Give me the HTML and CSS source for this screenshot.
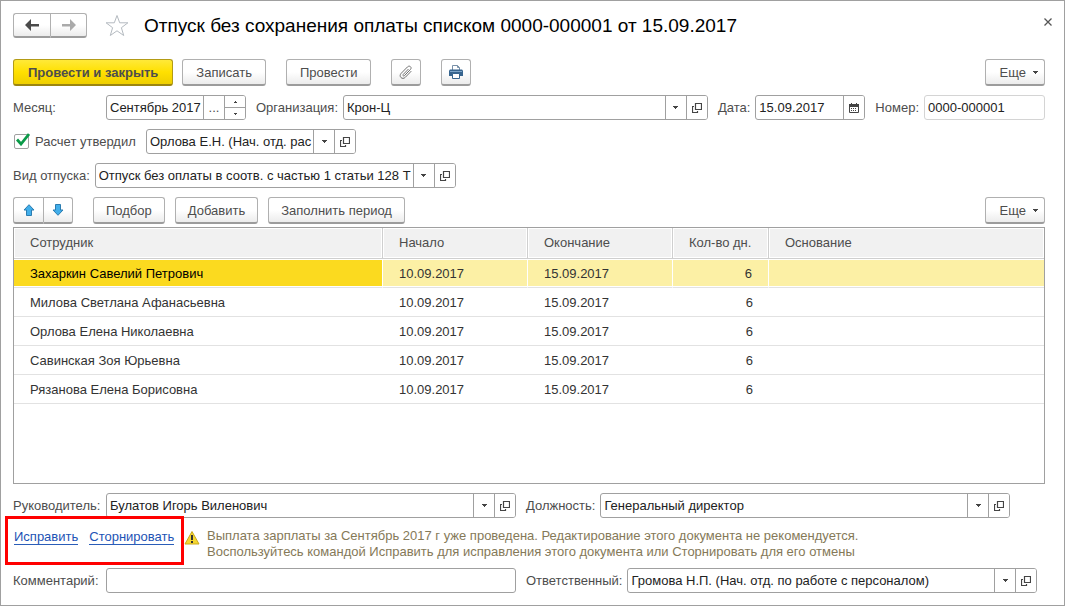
FILE: index.html
```html
<!DOCTYPE html>
<html lang="ru">

<head>
    <meta charset="UTF-8">
    <meta name="viewport" content="width=device-width, initial-scale=1.0">
    <title>Отпуск без сохранения оплаты списком</title>
    <link rel="stylesheet" href="styles.css">
</head>

<body>

    <!-- shared icons -->
    <svg class="sprite" aria-hidden="true">
        <symbol id="i-down" viewBox="0 0 5 3">
            <path d="M0 0h5v1H4v1H3v1H2V2H1V1H0z" fill="#444" />
        </symbol>
        <symbol id="i-open" viewBox="0 0 10 10">
            <path d="M3.500.5h6v6h-6zM2 3.500H.5v6h5V8" fill="none" stroke="#444" stroke-width="1.200" />
        </symbol>
    </svg>

    <div class="window">

        <!-- title -->
        <header class="title-bar">
            <div class="button-group">
                <button class="btn nav" aria-label="Назад">
                    <svg width="14" height="12" viewBox="0 0 14 12"><path d="M14 5H6V0L0 6l6 6V7.500h8z" fill="#4a4a4a" /></svg>
                </button>
                <button class="btn nav" aria-label="Вперед">
                    <svg width="14" height="12" viewBox="0 0 14 12"><path d="M0 5h8V0l6 6-6 6V7.500H0z" fill="#aaa" /></svg>
                </button>
            </div>
            <button class="plain star" aria-label="В избранное">
                <svg width="24" height="23" viewBox="0 0 24 23"><path d="M12 1.500l2.700 7.300h8.200l-6.500 4.900 2.300 7.800-6.700-4.700-6.700 4.700 2.300-7.800L1.100 8.800h8.200z" fill="#fff" stroke="#b4bac0" /></svg>
            </button>
            <h1>Отпуск без сохранения оплаты списком 0000-000001 от 15.09.2017</h1>
            <button class="plain close" aria-label="Закрыть">
                <svg width="8" height="8" viewBox="0 0 8 8"><path d="M.5.5l7 7M7.500.5l-7 7" stroke="#555" stroke-width="1.300" /></svg>
            </button>
        </header>

        <main class="content">

            <!-- commands -->
            <div class="row commands">
                <button class="btn primary">Провести и закрыть</button>
                <button class="btn">Записать</button>
                <button class="btn spaced">Провести</button>
                <button class="btn icon spaced" aria-label="Файлы">
                    <svg width="14" height="15" viewBox="0 0 14 15"><path d="M9.500 4L4.200 9.500c-.8.900.4 2 1.200 1.200l6-6.200c2-2.100-.9-4.600-2.900-2.600L2.200 8.300c-3 3.100 1.100 7 4.100 4l6-6.200" fill="none" stroke="#707070" /></svg>
                </button>
                <button class="btn icon spaced" aria-label="Печать">
                    <svg width="14" height="14" viewBox="0 0 14 14">
                        <path d="M3.500 5V.5h5l2 2V5" fill="#fff" stroke="#7890a8" />
                        <path d="M8.500.5v2h2" fill="none" stroke="#7890a8" />
                        <path d="M1 4.500h12l1 1V11H0V5.500z" fill="#37658f" />
                        <path d="M1 6.500h12" stroke="#7ca4c8" />
                        <path d="M3.500 8.500h7v5h-7z" fill="#fff" stroke="#37658f" />
                    </svg>
                </button>
                <button class="btn more">Еще <svg class="down"><use href="#i-down" /></svg></button>
            </div>

            <!-- document fields -->
            <div class="row">
                <label class="first" for="month">Месяц:</label>
                <div class="field month">
                    <input type="text" id="month" value="Сентябрь 2017">
                    <button aria-label="Выбрать месяц">...</button>
                    <div class="spinner">
                        <button aria-label="Следующий месяц"><svg width="3" height="2" viewBox="0 0 3 2"><path d="M1 0h1v1h1v1H0V1h1z" fill="#444" /></svg></button>
                        <button aria-label="Предыдущий месяц"><svg width="3" height="2" viewBox="0 0 3 2"><path d="M0 0h3v1H2v1H1V1H0z" fill="#444" /></svg></button>
                    </div>
                </div>
                <label for="org">Организация:</label>
                <div class="field wide">
                    <input type="text" id="org" value="Крон-Ц">
                    <button aria-label="Список"><svg class="down"><use href="#i-down" /></svg></button>
                    <button aria-label="Открыть"><svg class="open"><use href="#i-open" /></svg></button>
                </div>
                <label for="date">Дата:</label>
                <div class="field date">
                    <input type="text" id="date" value="15.09.2017">
                    <button aria-label="Календарь">
                        <svg width="10" height="10" viewBox="0 0 10 10"><path d="M.5 1.500h9v8h-9z" fill="#fff" stroke="#444" /><path d="M0 1h10v3H0zM2 0h1v2H2zM7 0h1v2H7zM2 5h1v1H2zM4 5h1v1H4zM6 5h1v1H6zM2 7h1v1H2zM4 7h1v1H4zM6 7h1v1H6z" fill="#444" /></svg>
                    </button>
                </div>
                <label for="number">Номер:</label>
                <div class="field number">
                    <input type="text" id="number" value="0000-000001" readonly>
                </div>
            </div>

            <div class="row">
                <label class="check">
                    <input type="checkbox" checked>
                    <svg class="tick" width="14" height="13" viewBox="0 0 14 13"><path d="M1 6.500l4 4.500L13 1" fill="none" stroke="#0a9a48" stroke-width="2.800" /></svg>
                    Расчет утвердил
                </label>
                <div class="field approver">
                    <input type="text" aria-label="Расчет утвердил" value="Орлова Е.Н. (Нач. отд. рас">
                    <button aria-label="Список"><svg class="down"><use href="#i-down" /></svg></button>
                    <button aria-label="Открыть"><svg class="open"><use href="#i-open" /></svg></button>
                </div>
            </div>

            <div class="row">
                <label for="kind">Вид отпуска:</label>
                <div class="field kind">
                    <input type="text" id="kind" value="Отпуск без оплаты в соотв. с частью 1 статьи 128 Т">
                    <button aria-label="Список"><svg class="down"><use href="#i-down" /></svg></button>
                    <button aria-label="Открыть"><svg class="open"><use href="#i-open" /></svg></button>
                </div>
            </div>

            <!-- employees -->
            <div class="row commands table-commands">
                <div class="button-group">
                    <button class="btn icon" aria-label="Вверх">
                        <svg width="12" height="12" viewBox="0 0 12 12"><path d="M6 .7l5 5.300H8.500v5.500h-5V6H1z" fill="#41aeea" stroke="#2b7cb0" /></svg>
                    </button>
                    <button class="btn icon" aria-label="Вниз">
                        <svg width="12" height="12" viewBox="0 0 12 12"><path d="M6 11.300L11 6H8.500V.5h-5V6H1z" fill="#41aeea" stroke="#2b7cb0" /></svg>
                    </button>
                </div>
                <button class="btn spaced">Подбор</button>
                <button class="btn">Добавить</button>
                <button class="btn">Заполнить период</button>
                <button class="btn more">Еще <svg class="down"><use href="#i-down" /></svg></button>
            </div>

            <div class="table-box">
                <table>
                    <colgroup>
                        <col class="c-name">
                        <col class="c-date">
                        <col class="c-date">
                        <col class="c-days">
                        <col>
                    </colgroup>
                    <thead>
                        <tr>
                            <th>Сотрудник</th>
                            <th>Начало</th>
                            <th>Окончание</th>
                            <th>Кол-во дн.</th>
                            <th>Основание</th>
                        </tr>
                    </thead>
                    <tbody>
                        <tr class="selected">
                            <td>Захаркин Савелий Петрович</td>
                            <td>10.09.2017</td>
                            <td>15.09.2017</td>
                            <td class="num">6</td>
                            <td></td>
                        </tr>
                        <tr>
                            <td>Милова Светлана Афанасьевна</td>
                            <td>10.09.2017</td>
                            <td>15.09.2017</td>
                            <td class="num">6</td>
                            <td></td>
                        </tr>
                        <tr>
                            <td>Орлова Елена Николаевна</td>
                            <td>10.09.2017</td>
                            <td>15.09.2017</td>
                            <td class="num">6</td>
                            <td></td>
                        </tr>
                        <tr>
                            <td>Савинская Зоя Юрьевна</td>
                            <td>10.09.2017</td>
                            <td>15.09.2017</td>
                            <td class="num">6</td>
                            <td></td>
                        </tr>
                        <tr>
                            <td>Рязанова Елена Борисовна</td>
                            <td>10.09.2017</td>
                            <td>15.09.2017</td>
                            <td class="num">6</td>
                            <td></td>
                        </tr>
                    </tbody>
                </table>
            </div>

            <!-- footer fields -->
            <div class="row">
                <label class="first" for="head">Руководитель:</label>
                <div class="field long">
                    <input type="text" id="head" value="Булатов Игорь Виленович">
                    <button aria-label="Список"><svg class="down"><use href="#i-down" /></svg></button>
                    <button aria-label="Открыть"><svg class="open"><use href="#i-open" /></svg></button>
                </div>
                <label for="post">Должность:</label>
                <div class="field long">
                    <input type="text" id="post" value="Генеральный директор">
                    <button aria-label="Список"><svg class="down"><use href="#i-down" /></svg></button>
                    <button aria-label="Открыть"><svg class="open"><use href="#i-open" /></svg></button>
                </div>
            </div>

            <div class="notice">
                <div class="links">
                    <a href="#">Исправить</a>
                    <a href="#">Сторнировать</a>
                </div>
                <svg class="warning" width="16" height="16" viewBox="0 0 16 16">
                    <path d="M8 1.500l7 12.500H1z" fill="#f5d730" stroke="#c9a81c" stroke-linejoin="round" />
                    <path d="M7 5h2v5H7zM7 11h2v2H7z" fill="#333" />
                </svg>
                <p>Выплата зарплаты за Сентябрь 2017 г уже проведена. Редактирование этого документа не рекомендуется.<br>
                    Воспользуйтесь командой Исправить для исправления этого документа или Сторнировать для его отмены</p>
            </div>

            <div class="row">
                <label class="first" for="comment">Комментарий:</label>
                <div class="field long">
                    <input type="text" id="comment">
                </div>
                <label for="author">Ответственный:</label>
                <div class="field long">
                    <input type="text" id="author" value="Громова Н.П. (Нач. отд. по работе с персоналом)">
                    <button aria-label="Список"><svg class="down"><use href="#i-down" /></svg></button>
                    <button aria-label="Открыть"><svg class="open"><use href="#i-open" /></svg></button>
                </div>
            </div>

        </main>
    </div>

</body>

</html>
```
FILE: styles.css
```css
*,
*::after {
    margin: 0;
    padding: 0;
    box-sizing: border-box;
}

body,
button,
input {
    font-family: "Liberation Sans", Arial, sans-serif;
    font-size: 13px;
    color: #4d4d4d;
}

svg {
    display: block;
    flex: none;
}

.sprite {
    position: absolute;
    width: 0;
    height: 0;
}

.window {
    min-height: 100vh;
    border: 1px solid #a0a0a0;
    display: flex;
    flex-direction: column;
    background-color: white;
}

/* title */
.title-bar {
    display: flex;
    align-items: center;
    padding: 12px 12px 0;
}

.title-bar h1 {
    flex: 1;
    padding-top: 1px;
    font-size: 19px;
    font-weight: normal;
    line-height: 24px;
    color: black;
}

.plain {
    border: none;
    background: none;
}

.star {
    margin: 0 15px 0 18px;
}

.close {
    align-self: flex-start;
    padding-top: 5px;
}

/* rows */
.content {
    flex: 1;
    display: flex;
    flex-direction: column;
    gap: 9px;
    padding: 21px 19px 12px 12px;
}

.row {
    display: flex;
    align-items: center;
}

.row label {
    flex: none;
    padding-right: 5px;
    white-space: nowrap;
}

.row .first {
    width: 93px;
    padding-right: 0;
}

.row .field + label {
    margin-left: 10px;
}

/* buttons */
.btn {
    display: flex;
    align-items: center;
    justify-content: center;
    height: 27px;
    padding: 0 13px;
    border: 1px solid #b0b0b0;
    border-bottom: 2px solid #9c9c9c;
    border-radius: 3px;
    background: linear-gradient(white 50%, #ececec);
    white-space: nowrap;
}

.commands {
    gap: 9px;
}

.commands .spaced {
    margin-left: 11px;
}

.btn.primary {
    padding: 0 14px;
    border-color: #b39b15;
    border-bottom-color: #9c8610;
    background: linear-gradient(#ffe939, #ffe000 50%, #efcf00);
    font-weight: bold;
}

.table-commands {
    gap: 10px;
    margin-bottom: -6px;
}

.table-commands .btn {
    padding: 0 12px;
}

.table-commands .spaced {
    margin-left: 10px;
}

.btn.icon {
    width: 30px;
    padding: 0;
}

.btn.nav {
    width: 37px;
    height: 25px;
    padding: 0;
}

.btn.more {
    gap: 7px;
    margin-left: auto;
    padding: 0 6px 0 14px;
}

.button-group {
    display: flex;
}

.button-group .btn:first-child {
    border-right: none;
    border-radius: 3px 0 0 3px;
}

.button-group .btn:last-child {
    border-radius: 0 3px 3px 0;
}

.down {
    width: 5px;
    height: 3px;
}

.open {
    width: 10px;
    height: 10px;
}

/* fields */
.field {
    display: flex;
    min-width: 0;
    height: 25px;
    border: 1px solid #a0a0a0;
    border-radius: 3px;
    overflow: hidden;
}

.field input {
    flex: 1;
    min-width: 0;
    padding: 0 0 0 3px;
    border: none;
    outline: none;
    background: none;
    color: #222;
}

.field button {
    display: flex;
    align-items: center;
    justify-content: center;
    flex: none;
    width: 21px;
    border: none;
    border-left: 1px solid #a0a0a0;
    background: white;
}

.spinner {
    display: flex;
    flex-direction: column;
}

.spinner button {
    flex: 1;
}

.spinner button + button {
    border-top: 1px solid #a0a0a0;
}

.month {
    width: 140px;
}

.wide {
    flex: 1;
}

.date {
    width: 110px;
}

.number {
    width: 121px;
    border-color: #d4d4d4;
}

.approver {
    width: 210px;
}

.kind {
    width: 361px;
}

.long {
    flex: 0 1 410px;
}

/* checkbox */
.row .check {
    position: relative;
    display: flex;
    align-items: center;
    gap: 6px;
    width: 133px;
    padding: 0 0 0 1px;
}

.check input {
    appearance: none;
    width: 15px;
    height: 15px;
    border: 1px solid #a0a0a0;
    border-radius: 2px;
}

.check .tick {
    position: absolute;
    left: 3px;
    top: -1px;
    display: none;
}

.check input:checked + .tick {
    display: block;
}

/* table */
.table-box {
    flex: 1;
    border: 1px solid #a0a0a0;
}

table {
    width: 100%;
    table-layout: fixed;
    border-collapse: separate;
    border-spacing: 0;
}

.c-name {
    width: 369px;
}

.c-date {
    width: 145px;
}

.c-days {
    width: 96px;
}

th,
td {
    height: 29px;
    padding: 0 16px;
    border-bottom: 1px solid #e2e2e2;
    text-align: left;
    white-space: nowrap;
    overflow: hidden;
}

th {
    height: 31px;
    padding-bottom: 2px;
    border-right: 1px solid #cfcfcf;
    border-bottom-color: #cfcfcf;
    background-color: #f1f1f1;
    box-shadow: inset 0 0 0 1px white;
    font-weight: normal;
}

th:last-child {
    border-right: none;
}

td {
    color: #333;
}

td.num {
    text-align: right;
}

.selected td {
    border-right: 1px solid white;
    background-color: #fcf0a5;
    box-shadow: inset 0 1px white, inset 0 -1px white;
}

.selected td:first-child {
    background-color: #fbda1f;
    color: black;
}

.selected td:last-child {
    border-right: none;
}

/* notice */
.notice {
    display: flex;
    padding-top: 1px;
    margin-bottom: -1px;
    line-height: 16px;
}

.links {
    position: relative;
    display: flex;
    align-items: flex-start;
    gap: 11px;
    width: 171px;
    padding: 2px 0 0 1px;
}

/* red frame around the links */
.links::after {
    content: "";
    position: absolute;
    left: -8px;
    top: -12px;
    width: 179px;
    height: 49px;
    border: 3px solid #f00;
    pointer-events: none;
}

.links a {
    line-height: 14px;
    border-bottom: 1px solid #2a5db8;
    color: #1d53b5;
    text-decoration: none;
}

.notice .warning {
    margin: 2px 7px 0 0;
}

.notice p {
    color: #857958;
}
```
